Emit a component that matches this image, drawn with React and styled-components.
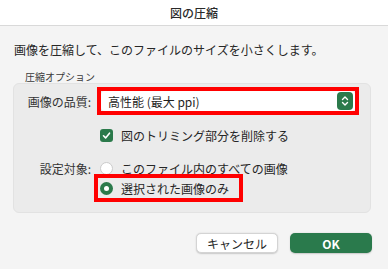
import React from 'react';
import styled, { createGlobalStyle } from 'styled-components';

const GlobalStyle = createGlobalStyle`
  html, body {
    margin: 0;
    padding: 0;
    background: #f4f4f4;
  }
  body {
    font-family: "Noto Sans CJK JP", "Noto Sans", sans-serif;
    color: #262626;
  }
`;

const Window = styled.div`
  width: 388px;
  height: 269px;
  background: #f4f4f4;
  display: flex;
  flex-direction: column;
  overflow: hidden;
`;

const TitleBar = styled.div`
  height: 25px;
  background: #ffffff;
  border-bottom: 1px solid #d9d9d9;
  display: flex;
  align-items: center;
  justify-content: center;
  font-size: 12px;
  font-weight: 500;
  color: #2a2a2a;
`;

const Body = styled.div`
  padding: 16px 17px 0 13px;
  display: flex;
  flex-direction: column;
`;

const Description = styled.div`
  font-size: 12px;
  line-height: 16px;
  padding-left: 1px;
`;

const Legend = styled.div`
  margin-top: 13px;
  font-size: 10px;
  line-height: 12px;
  padding-left: 12px;
  color: #3a3a3a;
`;

const Group = styled.div`
  height: 130px;
  box-sizing: border-box;
  background: #ebebeb;
  border: 1px solid #e2e2e2;
  border-radius: 6px;
  padding: 3px 11px 0 0;
  display: flex;
  flex-direction: column;
`;

const Row = styled.div`
  display: grid;
  grid-template-columns: 77px 1fr;
  column-gap: 3px;
  align-items: center;
  height: ${(p) => p.$h}px;
  margin-top: ${(p) => p.$mt || 0}px;
`;

const Label = styled.div`
  font-size: 12px;
  text-align: right;
  color: #333;
`;

const Highlight = styled.div`
  border: 4px solid #ff0000;
  box-sizing: border-box;
  height: 28px;
  width: ${(p) => (p.$w ? `${p.$w}px` : 'auto')};
  margin-left: ${(p) => p.$ml || 0}px;
  display: flex;
  align-items: center;
  padding: 0 ${(p) => p.$px || 0}px;
`;

const Select = styled.div`
  flex: 1;
  height: 20px;
  background: #ffffff;
  border-radius: 4px;
  display: flex;
  align-items: center;
  justify-content: space-between;
  padding: 0 2px 0 7px;
  font-size: 12px;
  color: #1f1f1f;
`;

const Stepper = styled.div`
  width: 16px;
  height: 18px;
  border-radius: 4px;
  background: #2b7a4b;
  display: flex;
  align-items: center;
  justify-content: center;
`;

const Option = styled.div`
  display: flex;
  align-items: center;
  gap: 8px;
  font-size: 12px;
  padding-left: ${(p) => p.$pl || 0}px;
`;

const Checkbox = styled.div`
  width: 13px;
  height: 13px;
  border-radius: 3px;
  background: #2b7a4b;
  display: flex;
  align-items: center;
  justify-content: center;
`;

const Radio = styled.div`
  width: 13px;
  height: 13px;
  box-sizing: border-box;
  border-radius: 50%;
  background: ${(p) => (p.$checked ? '#2b7a4b' : '#ffffff')};
  border: ${(p) => (p.$checked ? 'none' : '1px solid #cbcbcb')};
  display: flex;
  align-items: center;
  justify-content: center;

  &::after {
    content: '';
    display: ${(p) => (p.$checked ? 'block' : 'none')};
    width: 5px;
    height: 5px;
    border-radius: 50%;
    background: #ffffff;
  }
`;

const Footer = styled.div`
  margin-top: 20px;
  display: flex;
  justify-content: flex-end;
  gap: 12px;
  padding-right: 0;
  margin-right: -1px;
`;

const Button = styled.button`
  width: 82px;
  height: 20px;
  border-radius: 5px;
  font-family: "Noto Sans CJK JP", "Noto Sans", sans-serif;
  font-size: 12px;
  padding: 0;
  display: flex;
  align-items: center;
  justify-content: center;
  cursor: pointer;
  background: ${(p) => (p.$primary ? '#2a7a4c' : '#ffffff')};
  color: ${(p) => (p.$primary ? '#ffffff' : '#262626')};
  font-weight: ${(p) => (p.$primary ? 700 : 400)};
  border: ${(p) => (p.$primary ? 'none' : '0.5px solid #d4d4d4')};
  box-shadow: 0 0.5px 1.5px rgba(0, 0, 0, 0.18);
`;

const App = () => {
  return (
    <>
      <GlobalStyle />
      <Window>
        <TitleBar>図の圧縮</TitleBar>
        <Body>
          <Description>画像を圧縮して、このファイルのサイズを小さくします。</Description>
          <Legend>圧縮オプション</Legend>
          <Group>
            <Row $h={28}>
              <Label>画像の品質:</Label>
              <Highlight $ml={3}>
                <Select>
                  <span>高性能 (最大 ppi)</span>
                  <Stepper>
                    <svg width="8" height="12" viewBox="0 0 8 12" fill="none">
                      <path d="M1.5 4.5 L4 2 L6.5 4.5" stroke="#fff" strokeWidth="1.4" strokeLinecap="round" strokeLinejoin="round" />
                      <path d="M1.5 7.5 L4 10 L6.5 7.5" stroke="#fff" strokeWidth="1.4" strokeLinecap="round" strokeLinejoin="round" />
                    </svg>
                  </Stepper>
                </Select>
              </Highlight>
            </Row>
            <Row $h={20} $mt={10}>
              <span />
              <Option $pl={6}>
                <Checkbox>
                  <svg width="9" height="9" viewBox="0 0 9 9" fill="none">
                    <path d="M1.5 4.8 L3.6 6.9 L7.5 2.2" stroke="#fff" strokeWidth="1.6" strokeLinecap="round" strokeLinejoin="round" />
                  </svg>
                </Checkbox>
                図のトリミング部分を削除する
              </Option>
            </Row>
            <Row $h={14} $mt={15}>
              <Label>設定対象:</Label>
              <Option $pl={6}>
                <Radio />
                このファイル内のすべての画像
              </Option>
            </Row>
            <Row $h={28}>
              <span />
              <Highlight $w={149} $px={2}>
                <Option>
                  <Radio $checked />
                  選択された画像のみ
                </Option>
              </Highlight>
            </Row>
          </Group>
          <Footer>
            <Button>キャンセル</Button>
            <Button $primary>OK</Button>
          </Footer>
        </Body>
      </Window>
    </>
  );
};

export default App;
